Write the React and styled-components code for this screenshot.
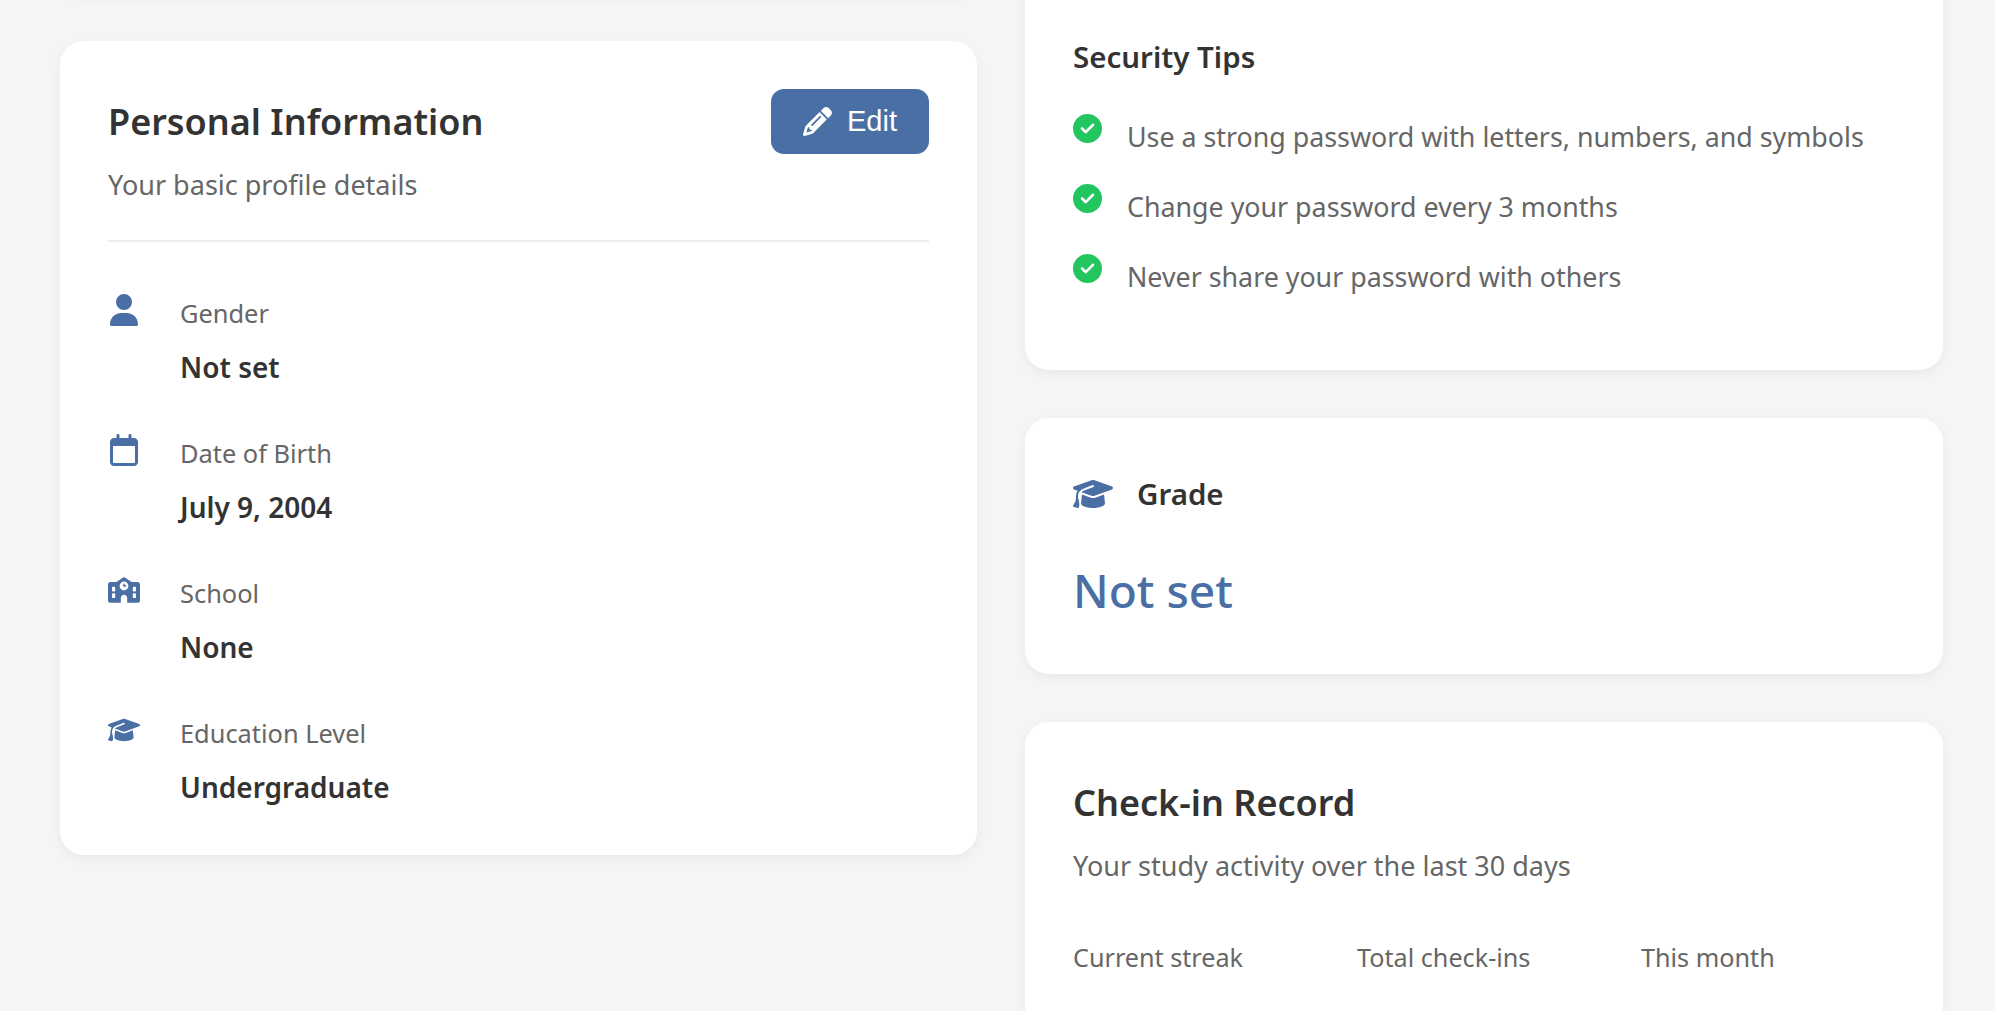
import React from "react";
import styled, { createGlobalStyle } from "styled-components";
import {
  FaCircleCheck,
  FaGraduationCap,
  FaPencil,
  FaRegCalendar,
  FaSchool,
  FaUser,
} from "react-icons/fa6";

const GlobalStyle = createGlobalStyle`
  html, body {
    margin: 0;
    background: #f5f5f5;
    font-family: "Noto Sans", "Open Sans", sans-serif;
    color: #333333;
  }
`;

const Page = styled.div`
  height: 100vh;
  overflow: hidden;
`;

const Columns = styled.div`
  display: grid;
  grid-template-columns: 917px 918px;
  column-gap: 48px;
  padding-left: 60px;
  margin-top: -100px;
`;

const Column = styled.div`
  display: flex;
  flex-direction: column;
  gap: 48px;
`;

const Card = styled.section`
  background: #ffffff;
  border-radius: 24px;
  box-shadow: 0 4px 12px rgba(0, 0, 0, 0.05);
  padding: 48px;
`;

const ClippedCard = styled(Card)`
  height: 93px;
  padding: 0;
`;

const ProfileCard = styled(Card)`
  padding-bottom: 51px;
`;

const TipsCard = styled(Card)`
  padding-top: 137px;
  padding-bottom: 69px;
`;

const GradeCard = styled(Card)`
  padding-top: 56px;
  padding-bottom: 53px;
`;

const RecordCard = styled(Card)`
  padding-bottom: 200px;
`;

const CardHeader = styled.div`
  display: flex;
  justify-content: space-between;
  align-items: flex-start;
  padding-bottom: 37px;
  border-bottom: 2px solid #eeeeee;
  margin-bottom: 52px;
`;

const Title = styled.h2`
  margin: 0;
  font-size: 36px;
  line-height: 66px;
  font-weight: 600;
`;

const Subtitle = styled.p`
  margin: 12px 0 0;
  font-size: 27px;
  line-height: 36px;
  color: #666666;
`;

const EditButton = styled.button`
  display: flex;
  align-items: center;
  gap: 15px;
  height: 65px;
  width: 158px;
  box-sizing: border-box;
  padding: 0 32px;
  background: #4a6fa5;
  color: #ffffff;
  border: none;
  border-radius: 13px;
  font-family: "Liberation Sans", Arial, sans-serif;
  font-size: 29px;
  svg {
    font-size: 29px;
    flex-shrink: 0;
  }
`;

const InfoList = styled.div`
  display: flex;
  flex-direction: column;
  gap: 50px;
`;

const InfoRow = styled.div`
  display: flex;
  align-items: flex-start;
`;

const InfoIcon = styled.div`
  width: 72px;
  flex-shrink: 0;
  color: #4a6fa5;
  line-height: 0;
  svg {
    height: 32px;
    width: auto;
  }
`;

const InfoLabel = styled.div`
  font-size: 25.4px;
  line-height: 34px;
  margin-top: 2px;
  margin-bottom: 20px;
  color: #666666;
`;

const InfoValue = styled.div`
  font-size: 28px;
  line-height: 34px;
  font-weight: 600;
`;

const SectionTitle = styled.h3`
  margin: 0 0 36px;
  font-size: 29.5px;
  line-height: 40px;
  font-weight: 600;
`;

const TipList = styled.ul`
  list-style: none;
  margin: 0;
  padding: 0;
  display: flex;
  flex-direction: column;
  gap: 22px;
`;

const Tip = styled.li`
  display: flex;
  align-items: flex-start;
  gap: 25px;
  font-size: 26.8px;
  line-height: 48px;
  color: #666666;
  svg {
    color: #22c55e;
    font-size: 29px;
    flex-shrink: 0;
    margin-top: 1px;
  }
`;

const GradeHeader = styled.div`
  display: flex;
  align-items: center;
  gap: 24px;
  color: #4a6fa5;
  margin-bottom: 45px;
  svg {
    height: 40px;
    width: auto;
  }
`;

const GradeLabel = styled.span`
  color: #333333;
  font-size: 29.5px;
  font-weight: 600;
  line-height: 40px;
`;

const GradeValue = styled.div`
  color: #4a6fa5;
  font-size: 46px;
  line-height: 62px;
  font-weight: 500;
`;

const Stats = styled.div`
  display: grid;
  grid-template-columns: repeat(3, 1fr);
  column-gap: 30px;
  margin-top: 56px;
`;

const StatLabel = styled.div`
  font-size: 25.2px;
  line-height: 34px;
  color: #666666;
`;

const profileRows = [
  { icon: <FaUser />, label: "Gender", value: "Not set" },
  { icon: <FaRegCalendar />, label: "Date of Birth", value: "July 9, 2004" },
  { icon: <FaSchool />, label: "School", value: "None" },
  { icon: <FaGraduationCap />, label: "Education Level", value: "Undergraduate" },
];

const tips = [
  "Use a strong password with letters, numbers, and symbols",
  "Change your password every 3 months",
  "Never share your password with others",
];

const stats = ["Current streak", "Total check-ins", "This month"];

const App = () => {
  return (
    <Page>
      <GlobalStyle />
      <Columns>
        <Column>
          <ClippedCard />
          <ProfileCard>
            <CardHeader>
              <div>
                <Title>Personal Information</Title>
                <Subtitle>Your basic profile details</Subtitle>
              </div>
              <EditButton>
                <FaPencil />
                Edit
              </EditButton>
            </CardHeader>
            <InfoList>
              {profileRows.map((row) => (
                <InfoRow key={row.label}>
                  <InfoIcon>{row.icon}</InfoIcon>
                  <div>
                    <InfoLabel>{row.label}</InfoLabel>
                    <InfoValue>{row.value}</InfoValue>
                  </div>
                </InfoRow>
              ))}
            </InfoList>
          </ProfileCard>
        </Column>
        <Column>
          <TipsCard>
            <SectionTitle>Security Tips</SectionTitle>
            <TipList>
              {tips.map((tip) => (
                <Tip key={tip}>
                  <FaCircleCheck />
                  {tip}
                </Tip>
              ))}
            </TipList>
          </TipsCard>
          <GradeCard>
            <GradeHeader>
              <FaGraduationCap />
              <GradeLabel>Grade</GradeLabel>
            </GradeHeader>
            <GradeValue>Not set</GradeValue>
          </GradeCard>
          <RecordCard>
            <Title>Check-in Record</Title>
            <Subtitle>Your study activity over the last 30 days</Subtitle>
            <Stats>
              {stats.map((stat) => (
                <StatLabel key={stat}>{stat}</StatLabel>
              ))}
            </Stats>
          </RecordCard>
        </Column>
      </Columns>
    </Page>
  );
};

export default App;
